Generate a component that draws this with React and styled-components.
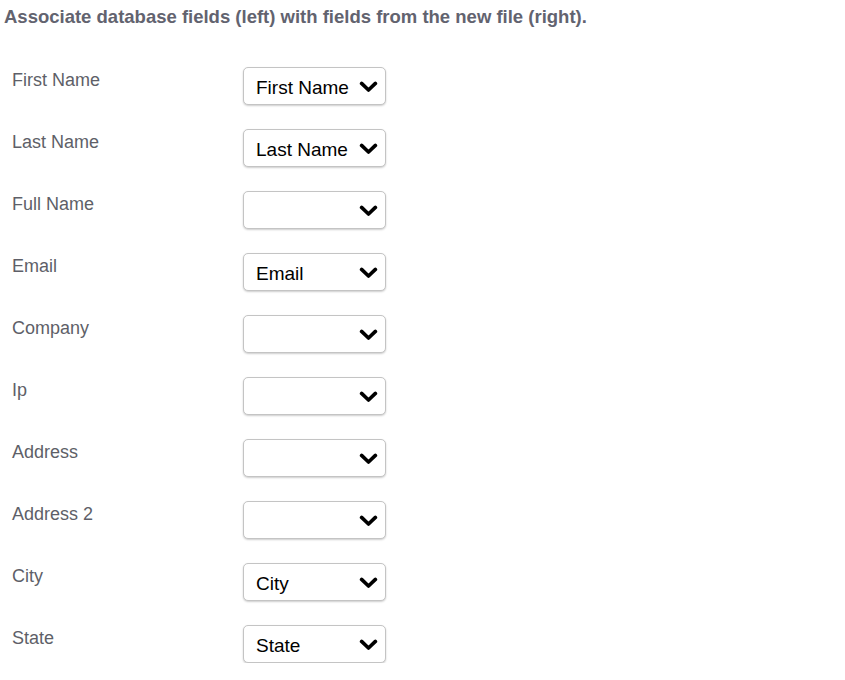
import React from "react";
import styled, { createGlobalStyle } from "styled-components";

const Global = createGlobalStyle`
  html, body { margin: 0; padding: 0; background: #fff; }
  body { font-family: "Liberation Sans", Arial, sans-serif; }
`;

const Page = styled.div`
  padding: 6px 0 0 4px;
`;

const Heading = styled.h1`
  margin: 0;
  font-size: 18.5px;
  line-height: 22px;
  font-weight: bold;
  color: #62636f;
`;

const Rows = styled.div`
  margin-top: 39px;
  display: flex;
  flex-direction: column;
  gap: 24px;
`;

const Row = styled.div`
  display: grid;
  grid-template-columns: 239px 143px;
  align-items: start;
`;

const Label = styled.label`
  padding: 2px 0 0 8px;
  font-size: 18px;
  line-height: 22px;
  color: #5e5f68;
`;

const SelectWrap = styled.div`
  position: relative;
  width: 143px;
  height: 38px;
`;

const Select = styled.select`
  appearance: none;
  -webkit-appearance: none;
  width: 100%;
  height: 100%;
  box-sizing: border-box;
  margin: 0;
  padding: 3px 30px 0 12px;
  border: 1px solid #c4c4c4;
  border-radius: 5px;
  background: #fff;
  box-shadow: 0 1px 2px rgba(0, 0, 0, 0.2);
  font-family: "Liberation Sans", Arial, sans-serif;
  font-size: 19px;
  color: #000;
  outline: none;
`;

const Chevron = styled.svg`
  position: absolute;
  right: 8px;
  top: 14px;
  width: 19px;
  height: 12px;
  pointer-events: none;
`;

const fields = [
  ["First Name", "First Name"],
  ["Last Name", "Last Name"],
  ["Full Name", ""],
  ["Email", "Email"],
  ["Company", ""],
  ["Ip", ""],
  ["Address", ""],
  ["Address 2", ""],
  ["City", "City"],
  ["State", "State"],
];

const options = ["", "First Name", "Last Name", "Email", "City", "State"];

function FieldRow({ label, value }) {
  return (
    <Row>
      <Label>{label}</Label>
      <SelectWrap>
        <Select defaultValue={value}>
          {options.map((o) => (
            <option key={o} value={o}>
              {o}
            </option>
          ))}
        </Select>
        <Chevron viewBox="0 0 19 12">
          <path d="M2.6 2.4 L9.5 9 L16.4 2.4" fill="none" stroke="#000" strokeWidth="3.6" strokeLinecap="round" strokeLinejoin="round" />
        </Chevron>
      </SelectWrap>
    </Row>
  );
}

export default function App() {
  return (
    <>
      <Global />
      <Page>
        <Heading>Associate database fields (left) with fields from the new file (right).</Heading>
        <Rows>
          {fields.map(([l, v]) => (
            <FieldRow key={l} label={l} value={v} />
          ))}
        </Rows>
      </Page>
    </>
  );
}
